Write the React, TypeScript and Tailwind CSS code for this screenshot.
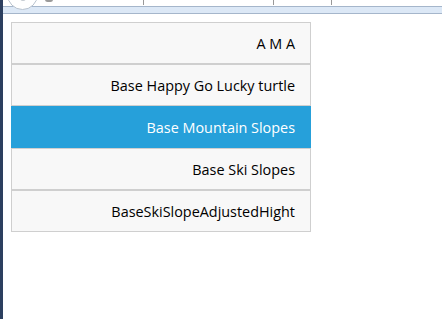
import React from 'react'

const items = [
  { label: 'A M A', active: false },
  { label: 'Base Happy Go Lucky turtle', active: false },
  { label: 'Base Mountain Slopes', active: true },
  { label: 'Base Ski Slopes', active: false },
  { label: 'BaseSkiSlopeAdjustedHight', active: false },
]

export default function App() {
  return (
    <div className="relative flex w-[442px] h-[319px] overflow-hidden bg-white" style={{ fontFamily: '"Open Sans", "Noto Sans", sans-serif' }}>
      {/* desktop edge */}
      <div className="w-[3px] shrink-0 bg-[#2c3f5f]" />

      <div className="flex-1 flex flex-col">
        {/* browser chrome remnant */}
        <div className="relative h-[6px] bg-white">
          <div className="absolute left-[42px] top-[-3px] w-[8px] h-[5px] rounded-full bg-[#9a9a9a]" />
          <div className="absolute left-[140px] top-0 w-px h-[5px] bg-[#999]" />
          <div className="absolute left-[270px] top-0 w-px h-[5px] bg-[#999]" />
          <div className="absolute left-[328px] top-0 w-px h-[5px] bg-[#999]" />
        </div>
        <div className="h-[8px] border-y border-[#a5b6cb] bg-[#dce8f6]" />

        {/* list */}
        <div className="mt-[8px] ml-[8px] w-[300px] flex flex-col">
          {items.map((item, i) => (
            <div
              key={i}
              className={
                item.active
                  ? 'h-[42px] flex items-center justify-end pr-[15px] pt-px text-[14.4px] text-white bg-[#26a0da] border-x border-[#26a0da]'
                  : 'h-[42px] flex items-center justify-end pr-[15px] pt-px text-[14.4px] text-black bg-[#f8f8f8] border border-[#cfcfcf]'
              }
            >
              {item.label}
            </div>
          ))}
        </div>
      </div>

      {/* back button circle */}
      <div className="absolute left-[7px] top-[-21px] w-[31px] h-[31px] rounded-full border border-[#b9c3cf] bg-white flex items-end justify-center pb-[8px]">
        <div className="w-[6px] h-[3px] rounded-b-full bg-[#c5cbd2]" />
      </div>
    </div>
  )
}
